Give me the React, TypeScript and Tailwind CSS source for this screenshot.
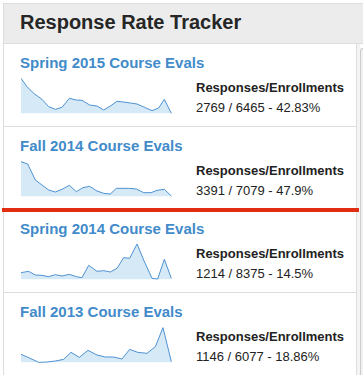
import React from 'react';

type Eval = {
  title: string;
  responses: number;
  enrollments: number;
  pct: string;
  top: number;
  points: [number, number][];
};

// sparkline points are in a 3x grid (x 62..515), one box of 453 x 111 per chart
const evals: Eval[] = [
  {
    title: 'Spring 2015 Course Evals',
    responses: 2769,
    enrollments: 6465,
    pct: '42.83%',
    top: 111,
    points: [
      [62, 115], [80, 140], [100, 160], [125, 178], [145, 200], [165, 208], [185, 202],
      [207, 175], [228, 180], [245, 181], [268, 195], [290, 198], [310, 210], [330, 198],
      [350, 184], [370, 186], [410, 192], [435, 203], [455, 212], [475, 204], [492, 178],
      [513, 220],
    ],
  },
  {
    title: 'Fall 2014 Course Evals',
    responses: 3391,
    enrollments: 7079,
    pct: '47.9%',
    top: 120,
    points: [
      [62, 125], [82, 132], [105, 180], [125, 195], [145, 210], [165, 216], [185, 208],
      [207, 196], [228, 215], [248, 203], [268, 199], [290, 213], [310, 220], [330, 222],
      [348, 205], [368, 205], [385, 205], [408, 207], [430, 218], [452, 218], [470, 211],
      [492, 208], [513, 228],
    ],
  },
  {
    title: 'Spring 2014 Course Evals',
    responses: 1214,
    enrollments: 8375,
    pct: '14.5%',
    top: 99,
    points: [
      [62, 188], [85, 184], [105, 195], [125, 196], [145, 200], [165, 194], [185, 198],
      [207, 193], [228, 200], [245, 203], [265, 166], [290, 184], [310, 182], [330, 186],
      [350, 175], [370, 143], [388, 145], [410, 102], [430, 150], [455, 205], [472, 207],
      [492, 148], [513, 205],
    ],
  },
  {
    title: 'Fall 2013 Course Evals',
    responses: 1146,
    enrollments: 6077,
    pct: '18.86%',
    top: 123,
    points: [
      [62, 208], [85, 218], [115, 232], [140, 231], [165, 228], [190, 223], [212, 202],
      [237, 217], [263, 196], [290, 210], [315, 216], [340, 216], [365, 222], [388, 193],
      [412, 202], [440, 205], [465, 185], [488, 128], [513, 230],
    ],
  },
];

function Sparkline({ top, points }: { top: number; points: [number, number][] }) {
  const base = top + 109;
  const line = points.map(([x, y]) => `${x},${y}`).join(' ');
  const area = `62,${base} ${line} 513,${base}`;
  return (
    <svg
      width={151}
      height={37}
      viewBox={`62 ${top} 453 111`}
      preserveAspectRatio="none"
      className="block shrink-0"
    >
      <polygon points={area} fill="#d6e9f6" />
      <polyline
        points={line}
        fill="none"
        stroke="#4f92d2"
        strokeWidth={1}
        strokeLinejoin="round"
        vectorEffect="non-scaling-stroke"
      />
    </svg>
  );
}

function EvalRow({ e, marker }: { e: Eval; marker?: boolean }) {
  return (
    <div className="relative h-[83px] border-b border-[#dddddd] pl-4 pt-2">
      <a className="block text-[15px] font-bold leading-[21px] text-[#428bca]">{e.title}</a>
      <div className="mt-1 flex items-start">
        <div className="ml-[1px]">
          <Sparkline top={e.top} points={e.points} />
        </div>
        <div className="ml-6 mt-[1px] text-[13px] leading-5 text-[#222]">
          <div className="font-bold">Responses/Enrollments</div>
          <div>
            {e.responses} / {e.enrollments} - {e.pct}
          </div>
        </div>
      </div>
      {marker && (
        <div className="absolute bottom-[-3px] left-[-2px] right-[-3px] h-[4px] bg-[#e12d12]" />
      )}
    </div>
  );
}

export default function App() {
  return (
    <div
      className="h-[375px] w-[363px] overflow-hidden bg-white pl-[3px] pt-[3px]"
      style={{ fontFamily: '"Liberation Sans", Arial, sans-serif' }}
    >
      <div className="w-[380px] border-l border-t border-[#dddddd]">
        <header className="border-b border-[#dddddd] bg-[#ececec] pb-[7px] pl-4 pt-1">
          <h1 className="text-[20px] font-bold leading-[28px] text-[#262626]">
            Response Rate Tracker
          </h1>
        </header>
        <div className="flex">
          <div className="w-[353px] border-r border-[#dddddd]">
            {evals.map((e, i) => (
              <EvalRow key={e.title} e={e} marker={i === 1} />
            ))}
          </div>
          <div className="w-[3px] bg-[#f4f4f4]" />
          <div className="mt-[4px] w-[20px] rounded-tl-[3px] border-l border-t border-[#cccccc] bg-[#f2f2f2]" />
        </div>
      </div>
    </div>
  );
}
